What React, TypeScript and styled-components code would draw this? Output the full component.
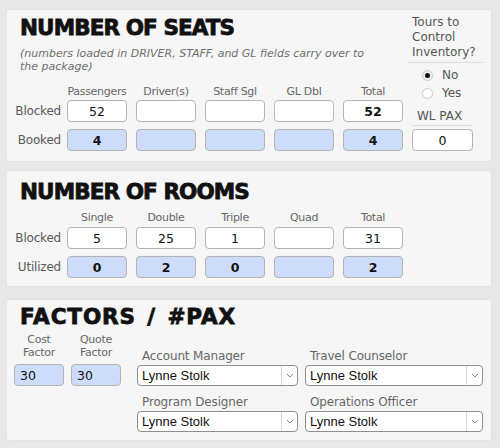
import React from "react";
import styled, { createGlobalStyle } from "styled-components";

const GlobalStyle = createGlobalStyle`
  html, body { margin: 0; padding: 0; background: #e7e7e7; }
  body { font-family: "DejaVu Sans", Verdana, sans-serif; }
  * { box-sizing: border-box; }
`;

const Page = styled.div`
  width: 500px;
  height: 448px;
  padding: 9px 8px 0 6px;
  display: flex;
  flex-direction: column;
`;

const Panel = styled.section<{ $mt: number; $pt: number; $pb: number }>`
  margin-top: ${(p) => p.$mt}px;
  padding: ${(p) => p.$pt}px 8px ${(p) => p.$pb}px 7px;
  background: #f6f6f6;
  border: 1px solid #e2e2e2;
  border-radius: 3px;
`;

const SplitRow = styled.div`
  display: flex;
`;

const Main = styled.div`
  flex: 1;
  min-width: 0;
`;

const Title = styled.h1<{ $ls?: number; $ws?: number }>`
  margin: 0 0 0 6px;
  font-family: "DejaVu Sans", Verdana, sans-serif;
  font-weight: 700;
  font-size: 21.5px;
  line-height: 26px;
  letter-spacing: ${(p) => p.$ls ?? -0.9}px;
  word-spacing: ${(p) => p.$ws ?? 0}px;
  color: #111;
  -webkit-text-stroke: 0.8px #111;
  white-space: nowrap;
`;

const Subtitle = styled.p`
  margin: 6px 0 0 6px;
  width: 356px;
  font-style: italic;
  font-size: 11px;
  line-height: 13px;
  color: #6f6f6f;
`;

const GridRow = styled.div<{ $mt: number }>`
  display: flex;
  align-items: center;
  margin-top: ${(p) => p.$mt}px;
`;

const RowLabel = styled.div`
  width: 47px;
  margin-right: 6px;
  text-align: right;
  white-space: nowrap;
  font-size: 12px;
  letter-spacing: -0.2px;
  color: #5a5a5a;
`;

const Cells = styled.div`
  display: grid;
  grid-template-columns: repeat(5, 60px);
  column-gap: 9px;
`;

const ColHead = styled.div`
  text-align: center;
  font-size: 11px;
  line-height: 14px;
  letter-spacing: -0.3px;
  color: #666;
  white-space: nowrap;
`;

const Field = styled.input<{ $blue?: boolean; $bold?: boolean; $left?: boolean; $h?: number }>`
  display: block;
  width: 100%;
  height: ${(p) => p.$h ?? 22}px;
  margin: 0;
  padding: 0 ${(p) => (p.$left ? "5px" : "0")};
  border: 1px solid #b4b4b4;
  border-radius: 4px;
  background: ${(p) => (p.$blue ? "#cddcfa" : "#fff")};
  font-family: "DejaVu Sans", Verdana, sans-serif;
  font-size: 12.5px;
  font-weight: ${(p) => (p.$bold ? 700 : 400)};
  color: #111;
  text-align: ${(p) => (p.$left ? "left" : "center")};
  outline: none;
`;

const Aside = styled.aside`
  width: 76px;
  flex-shrink: 0;
`;

const Question = styled.div`
  padding: 0 0 2px 5px;
  border-bottom: 1px solid #dedede;
  font-size: 12px;
  line-height: 15px;
  color: #555;
`;

const RadioGroup = styled.div`
  margin-top: 3px;
`;

const RadioRow = styled.label`
  display: flex;
  align-items: center;
  height: 18px;
  padding-left: 15px;
  font-size: 12px;
  color: #555;
`;

const Circle = styled.span<{ $on?: boolean }>`
  width: 11px;
  height: 11px;
  margin-right: 9px;
  border-radius: 50%;
  border: 1px solid #cbcbcb;
  background: ${(p) => (p.$on ? "#f0f0f0" : "#fff")};
  display: grid;
  place-items: center;
`;

const Dot = styled.span`
  width: 5px;
  height: 5px;
  border-radius: 50%;
  background: #111;
`;

const WlBox = styled.div`
  margin: 7px 0 0 5px;
  width: 61px;
`;

const WlLabel = styled.div`
  padding: 0 0 2px 5px;
  border-bottom: 1px solid #dedede;
  font-size: 12px;
  line-height: 14px;
  color: #555;
  white-space: nowrap;
`;

const WlField = styled.div`
  margin-top: 3px;
`;

const FactorsBody = styled.div`
  display: flex;
  align-items: flex-start;
`;

const Factors = styled.div`
  display: flex;
  gap: 7px;
  margin-top: 3px;
`;

const Factor = styled.div`
  width: 50px;
`;

const FactorLabel = styled.div`
  height: 26px;
  margin-bottom: 5px;
  text-align: center;
  font-size: 11px;
  line-height: 13px;
  letter-spacing: -0.3px;
  color: #666;
`;

const People = styled.div`
  display: grid;
  grid-template-columns: 161px 178px;
  column-gap: 7px;
  row-gap: 8px;
  margin: 18px 0 0 16px;
`;

const PersonLabel = styled.div`
  padding-left: 5px;
  font-size: 12px;
  line-height: 17px;
  letter-spacing: -0.15px;
  color: #666;
  white-space: nowrap;
`;

const SelectBox = styled.div`
  display: flex;
  height: 21px;
  border: 1px solid #8f8f8f;
  border-radius: 4px;
  background: #fff;
  overflow: hidden;
`;

const SelectValue = styled.div`
  flex: 1;
  padding-left: 4px;
  font-family: "Liberation Sans", Arial, sans-serif;
  font-size: 13px;
  line-height: 19px;
  color: #111;
`;

const SelectArrow = styled.div`
  width: 16px;
  border-left: 1px solid #dadada;
  display: flex;
  align-items: center;
  justify-content: center;
`;

type Cell = { v?: string; blue?: boolean; bold?: boolean };

const Table = ({
  heads,
  rows,
  headTop,
  firstTop,
}: {
  heads: string[];
  rows: { label: string; cells: Cell[] }[];
  headTop: number;
  firstTop: number;
}) => (
  <>
    <GridRow $mt={headTop}>
      <RowLabel />
      <Cells>
        {heads.map((h) => (
          <ColHead key={h}>{h}</ColHead>
        ))}
      </Cells>
    </GridRow>
    {rows.map((r, i) => (
      <GridRow key={r.label} $mt={i === 0 ? firstTop : 7}>
        <RowLabel>{r.label}</RowLabel>
        <Cells>
          {r.cells.map((c, j) => (
            <Field key={j} readOnly value={c.v ?? ""} $blue={c.blue} $bold={c.bold} />
          ))}
        </Cells>
      </GridRow>
    ))}
  </>
);

const Chevron = () => (
  <svg width="8" height="5" viewBox="0 0 8 5">
    <path d="M1 1 L4 4 L7 1" fill="none" stroke="#8a8a8a" strokeWidth="1" />
  </svg>
);

const Select = ({ label, value }: { label: string; value: string }) => (
  <div>
    <PersonLabel>{label}</PersonLabel>
    <SelectBox>
      <SelectValue>{value}</SelectValue>
      <SelectArrow>
        <Chevron />
      </SelectArrow>
    </SelectBox>
  </div>
);

export default function App() {
  const b = (v?: string): Cell => ({ v, blue: true, bold: true });
  return (
    <>
      <GlobalStyle />
      <Page>
        <Panel $mt={0} $pt={5} $pb={10}>
          <SplitRow>
            <Main>
              <Title>NUMBER OF SEATS</Title>
              <Subtitle>
                (numbers loaded in DRIVER, STAFF, and GL fields carry over to the package)
              </Subtitle>
              <Table
                heads={["Passengers", "Driver(s)", "Staff Sgl", "GL Dbl", "Total"]}
                headTop={12}
                firstTop={1}
                rows={[
                  { label: "Blocked", cells: [{ v: "52" }, {}, {}, {}, { v: "52", bold: true }] },
                  { label: "Booked", cells: [b("4"), b(), b(), b(), b("4")] },
                ]}
              />
            </Main>
            <Aside>
              <Question>Tours to Control Inventory?</Question>
              <RadioGroup>
                <RadioRow>
                  <Circle $on>
                    <Dot />
                  </Circle>
                  No
                </RadioRow>
                <RadioRow>
                  <Circle />
                  Yes
                </RadioRow>
              </RadioGroup>
              <WlBox>
                <WlLabel>WL PAX</WlLabel>
                <WlField>
                  <Field readOnly value="0" />
                </WlField>
              </WlBox>
            </Aside>
          </SplitRow>
        </Panel>

        <Panel $mt={8} $pt={8} $pb={8}>
          <Title>NUMBER OF ROOMS</Title>
          <Table
            heads={["Single", "Double", "Triple", "Quad", "Total"]}
            headTop={6}
            firstTop={2}
            rows={[
              { label: "Blocked", cells: [{ v: "5" }, { v: "25" }, { v: "1" }, {}, { v: "31" }] },
              { label: "Utilized", cells: [b("0"), b("2"), b("0"), b(), b("2")] },
            ]}
          />
        </Panel>

        <Panel $mt={12} $pt={4} $pb={8}>
          <Title $ls={0.9} $ws={3}>FACTORS / #PAX</Title>
          <FactorsBody>
            <Factors>
              <Factor>
                <FactorLabel>Cost Factor</FactorLabel>
                <Field readOnly value="30" $blue $left />
              </Factor>
              <Factor>
                <FactorLabel>Quote Factor</FactorLabel>
                <Field readOnly value="30" $blue $left />
              </Factor>
            </Factors>
            <People>
              <Select label="Account Manager" value="Lynne Stolk" />
              <Select label="Travel Counselor" value="Lynne Stolk" />
              <Select label="Program Designer" value="Lynne Stolk" />
              <Select label="Operations Officer" value="Lynne Stolk" />
            </People>
          </FactorsBody>
        </Panel>
      </Page>
    </>
  );
}
